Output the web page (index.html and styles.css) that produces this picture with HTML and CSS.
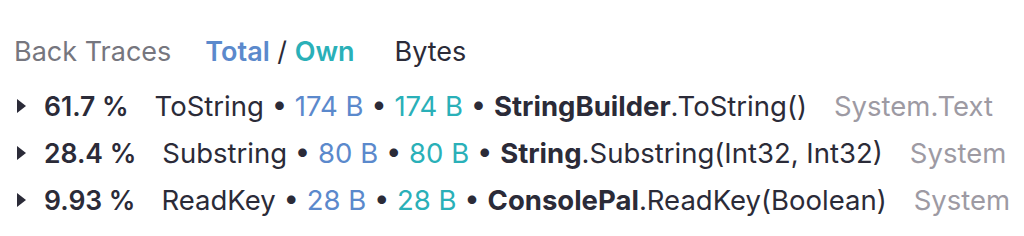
FILE: index.html
```html
<!DOCTYPE html>
<html lang="en">
<head>
    <meta charset="UTF-8">
    <title>Back Traces</title>
    <link rel="stylesheet" href="styles.css">
</head>
<body>
    <div class="traces">
        <div class="header">
            <span class="title">Back Traces</span>
            <span class="metric"><b class="total">Total</b> / <b class="own">Own</b></span>
            <span class="unit">Bytes</span>
        </div>

        <div class="row">
            <span class="caret"></span>
            <span class="pct">61.7 %</span>
            <span class="name">ToString • <span class="total">174 B</span> • <span class="own">174 B</span> • <b>StringBuilder</b>.ToString()</span>
            <span class="ns">System.Text</span>
        </div>
        <div class="row">
            <span class="caret"></span>
            <span class="pct">28.4 %</span>
            <span class="name">Substring • <span class="total">80 B</span> • <span class="own">80 B</span> • <b>String</b>.Substring(Int32, Int32)</span>
            <span class="ns">System</span>
        </div>
        <div class="row">
            <span class="caret"></span>
            <span class="pct">9.93 %</span>
            <span class="name">ReadKey • <span class="total">28 B</span> • <span class="own">28 B</span> • <b>ConsolePal</b>.ReadKey(Boolean)</span>
            <span class="ns">System</span>
        </div>
    </div>
</body>
</html>
```

FILE: styles.css
```css
body {
    margin: 0;
    background: #fff;
    font-family: Inter, "Noto Sans", sans-serif;
    font-size: 27px;
    color: #2b2b38;
}
.traces {
    padding: 34px 14px 0 14px;
}
.header {
    display: flex;
    align-items: center;
    height: 34px;
    margin-bottom: 14px;
}
.title {
    color: #76767e;
}
.metric {
    margin-left: 34px;
}
.metric b {
    font-weight: 600;
}
.unit {
    margin-left: 40px;
}
.total {
    color: #5b89cc;
}
.own {
    color: #2ab0b8;
}
.row {
    display: flex;
    align-items: center;
    height: 47px;
    font-size: 27.5px;
    white-space: nowrap;
}
.caret {
    width: 0;
    height: 0;
    margin-left: 3px;
    border-top: 7px solid transparent;
    border-bottom: 7px solid transparent;
    border-left: 9px solid #2b2b38;
}
.pct {
    margin-left: 18px;
    font-size: 26.5px;
    font-weight: 600;
}
.name {
    margin-left: 26px;
}
.name b {
    font-weight: 700;
}
.ns {
    margin-left: 27px;
    color: #9d9aa3;
}
```
